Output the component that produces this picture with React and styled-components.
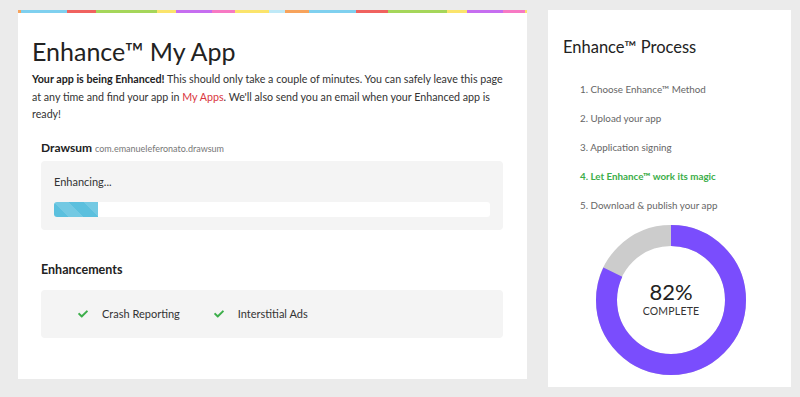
import React from "react";
import styled, { createGlobalStyle } from "styled-components";
import { FaCheck } from "react-icons/fa";

const GlobalStyle = createGlobalStyle`
  body {
    margin: 0;
    background: #ebebeb;
    font-family: Lato, "Open Sans", sans-serif;
    color: #333;
  }
`;

const Page = styled.div`
  display: flex;
  align-items: flex-start;
  gap: 21px;
  padding: 10px 9px 0 18px;
`;

const Card = styled.div`
  background: #fff;
  width: ${(p) => p.$width}px;
  height: ${(p) => p.$height}px;
  box-sizing: border-box;
`;

const Stripe = styled.div`
  display: flex;
  height: 3px;
`;

const StripeSeg = styled.div`
  flex: ${(p) => p.$grow} 0 0;
  background: ${(p) => p.$color};
`;

const MainBody = styled.div`
  padding: 24px 16px 0 14px;
`;

const Title = styled.h1`
  margin: 0;
  font-size: 25px;
  font-weight: 400;
  line-height: 28px;
  color: #222;
`;

const Intro = styled.p`
  margin: 5px 0 0;
  font-size: 10.7px;
  line-height: 17.5px;
  color: #333;
  strong {
    font-weight: 700;
    color: #222;
  }
  a {
    color: #d9363e;
    text-decoration: none;
  }
`;

const Section = styled.div`
  padding-left: 9px;
  margin-top: ${(p) => p.$top}px;
`;

const AppName = styled.div`
  font-size: 12px;
  line-height: 15px;
  font-weight: 700;
  color: #222;
  span {
    font-size: 9px;
    font-weight: 400;
    color: #777;
  }
`;

const SectionHeading = styled.div`
  font-size: 12.5px;
  line-height: 16px;
  font-weight: 700;
  color: #222;
`;

const GrayBox = styled.div`
  background: #f4f4f4;
  border-radius: 4px;
  width: 462px;
  box-sizing: border-box;
  margin-top: ${(p) => p.$top}px;
  padding: ${(p) => p.$pad};
`;

const StatusText = styled.div`
  font-size: 11px;
  line-height: 14px;
  color: #333;
`;

const Progress = styled.div`
  margin-top: 13px;
  height: 15px;
  width: 436px;
  background: #fff;
  border-radius: 3px;
  overflow: hidden;
`;

const ProgressFill = styled.div`
  height: 100%;
  background-color: #5bc0de;
  background-image: linear-gradient(
    45deg,
    rgba(255, 255, 255, 0.15) 25%,
    transparent 25%,
    transparent 50%,
    rgba(255, 255, 255, 0.15) 50%,
    rgba(255, 255, 255, 0.15) 75%,
    transparent 75%,
    transparent
  );
  background-size: 30px 30px;
`;

const FeatureRow = styled.div`
  display: flex;
  align-items: center;
  gap: 34px;
  height: 48px;
  padding-left: 37px;
`;

const Feature = styled.div`
  display: flex;
  align-items: center;
  gap: 14px;
  font-size: 11px;
  color: #333;
  svg {
    color: #3cae4a;
  }
`;

const SideBody = styled.div`
  padding: 27px 15px 0 15px;
`;

const SideTitle = styled.h2`
  margin: 0;
  font-size: 16.5px;
  line-height: 20px;
  font-weight: 400;
  color: #222;
`;

const Steps = styled.ol`
  list-style: none;
  margin: 18px 0 0;
  padding: 0 0 0 17px;
`;

const Step = styled.li`
  font-size: 9.8px;
  line-height: 29px;
  color: ${(p) => (p.$active ? "#3cae4a" : "#666")};
  font-weight: ${(p) => (p.$active ? 700 : 400)};
`;

const DonutWrap = styled.div`
  position: relative;
  width: 150px;
  height: 150px;
  margin: 5px 0 0 33px;
`;

const DonutLabel = styled.div`
  position: absolute;
  inset: 0;
  display: flex;
  flex-direction: column;
  align-items: center;
  justify-content: center;
  padding-bottom: 2px;
`;

const Percent = styled.div`
  font-size: 22px;
  line-height: 22px;
  font-weight: 400;
  color: #222;
`;

const Complete = styled.div`
  font-size: 10.5px;
  margin-top: 2px;
  letter-spacing: 0.2px;
  color: #333;
`;

const stripe = [
  [3, "#f7a35c"],
  [46, "#7fd0ef"],
  [29, "#f0625f"],
  [61, "#a5d65a"],
  [19, "#fbe46b"],
  [36, "#c66ef0"],
  [23, "#f779c3"],
  [34, "#fbe46b"],
  [16, "#bfe9f7"],
  [24, "#f7a35c"],
  [47, "#7fd0ef"],
  [32, "#f0625f"],
  [59, "#a5d65a"],
  [20, "#fbe46b"],
  [36, "#c66ef0"],
  [22, "#f779c3"],
  [2, "#fbe46b"],
];

const steps = [
  "1. Choose Enhance™ Method",
  "2. Upload your app",
  "3. Application signing",
  "4. Let Enhance™ work its magic",
  "5. Download & publish your app",
];

function Donut({ value }) {
  const r = 64.5;
  const c = 2 * Math.PI * r;
  return (
    <DonutWrap>
      <svg width="150" height="150" viewBox="0 0 150 150">
        <circle cx="75" cy="75" r={r} fill="none" stroke="#cccccc" strokeWidth="21" />
        <circle
          cx="75"
          cy="75"
          r={r}
          fill="none"
          stroke="#7a4dfd"
          strokeWidth="21"
          strokeDasharray={`${(c * value) / 100} ${c}`}
          transform="rotate(-90 75 75)"
        />
      </svg>
      <DonutLabel>
        <Percent>{value}%</Percent>
        <Complete>COMPLETE</Complete>
      </DonutLabel>
    </DonutWrap>
  );
}

export default function App() {
  return (
    <>
      <GlobalStyle />
      <Page>
        <Card $width={509} $height={369}>
          <Stripe>
            {stripe.map(([g, col], i) => (
              <StripeSeg key={i} $grow={g} $color={col} />
            ))}
          </Stripe>
          <MainBody>
            <Title>Enhance™ My App</Title>
            <Intro>
              <strong>Your app is being Enhanced!</strong> This should only take a couple of
              minutes. You can safely leave this page at any time and find your app in{" "}
              <a href="#">My Apps</a>. We'll also send you an email when your Enhanced app is
              ready!
            </Intro>
            <Section $top={17}>
              <AppName>
                Drawsum <span>com.emanueleferonato.drawsum</span>
              </AppName>
              <GrayBox $top={5} $pad="14px 13px 13px">
                <StatusText>Enhancing...</StatusText>
                <Progress>
                  <ProgressFill style={{ width: "10%" }} />
                </Progress>
              </GrayBox>
            </Section>
            <Section $top={32}>
              <SectionHeading>Enhancements</SectionHeading>
              <GrayBox $top={12} $pad="0">
                <FeatureRow>
                  <Feature>
                    <FaCheck size={10} />
                    Crash Reporting
                  </Feature>
                  <Feature>
                    <FaCheck size={10} />
                    Interstitial Ads
                  </Feature>
                </FeatureRow>
              </GrayBox>
            </Section>
          </MainBody>
        </Card>
        <Card $width={243} $height={377}>
          <SideBody>
            <SideTitle>Enhance™ Process</SideTitle>
            <Steps>
              {steps.map((s, i) => (
                <Step key={s} $active={i === 3}>
                  {s}
                </Step>
              ))}
            </Steps>
            <Donut value={82} />
          </SideBody>
        </Card>
      </Page>
    </>
  );
}
